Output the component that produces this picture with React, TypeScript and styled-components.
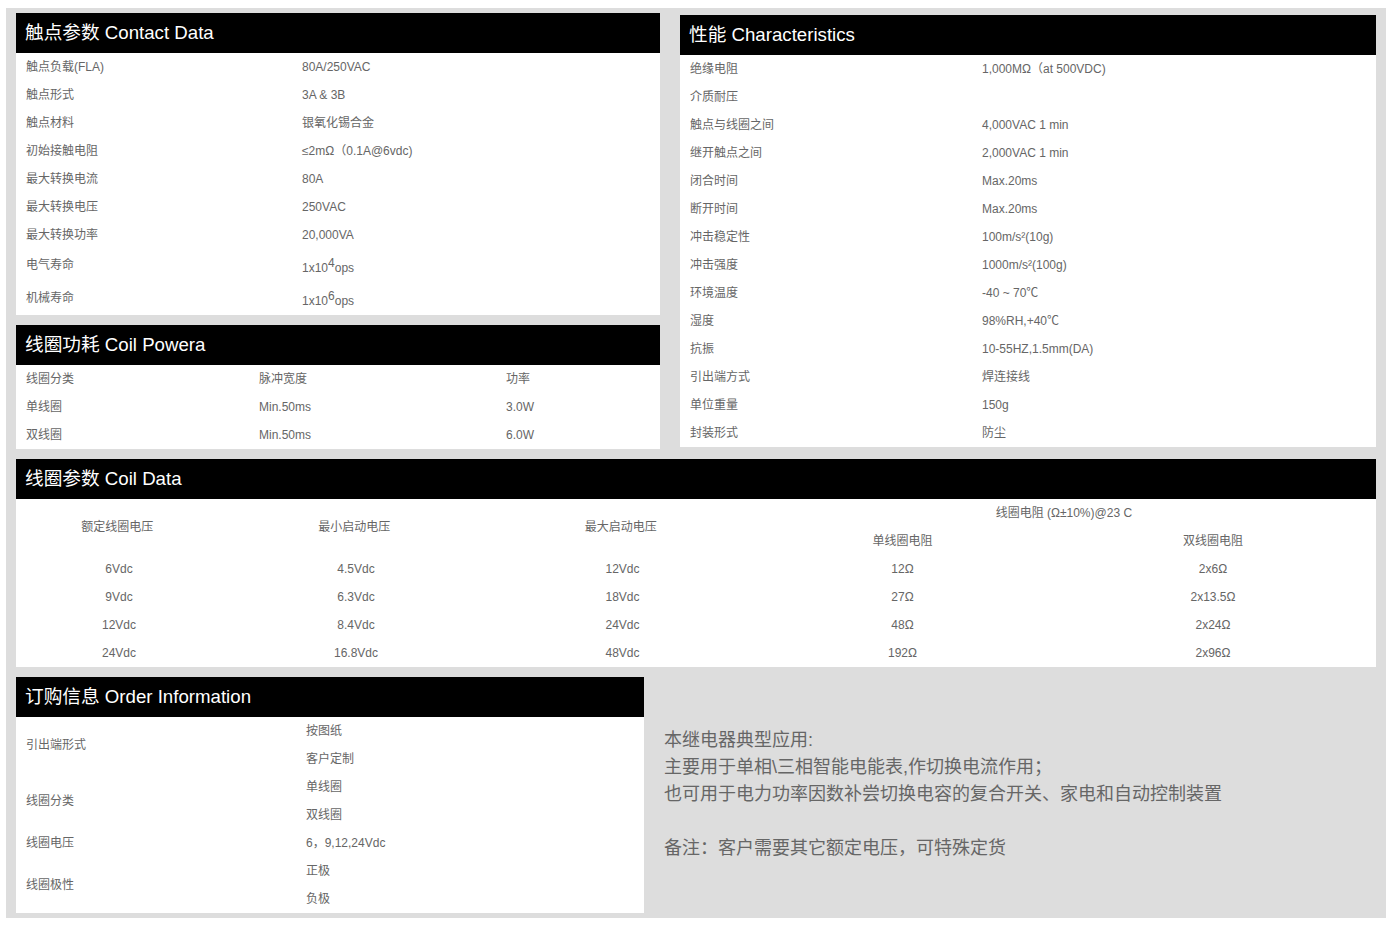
import React from "react";
import styled, { createGlobalStyle } from "styled-components";

const GlobalStyle = createGlobalStyle`
    html, body {
        margin: 0;
        padding: 0;
        background: #fff;
    }
    body {
        font-family: "Liberation Sans", Arial, "Noto Sans CJK SC", sans-serif;
        color: #666;
        font-size: 12px;
    }
`;

const Page = styled.div`
    width: 1380px;
    height: 910px;
    margin: 8px 0 0 6px;
    padding: 5px 10px;
    box-sizing: border-box;
    background: #ddd;
    display: flex;
    flex-direction: column;
    gap: 10px;
`;

const TopRow = styled.div`
    display: flex;
    align-items: flex-start;
    gap: 20px;
`;

const LeftColumn = styled.div`
    width: 644px;
    display: flex;
    flex-direction: column;
    gap: 10px;
`;

const RightColumn = styled.div`
    width: 696px;
    margin-top: 2px;
`;

const BottomRow = styled.div`
    display: flex;
    align-items: flex-start;
`;

const Card = styled.section<{ $width?: number }>`
    width: ${(p) => (p.$width ? `${p.$width}px` : "100%")};
    background: #fff;
    flex-shrink: 0;
`;

const Title = styled.h2`
    margin: 0;
    height: 40px;
    line-height: 40px;
    padding-left: 9px;
    background: #000;
    color: #fff;
    font-size: 18.67px;
    font-weight: 400;
`;

const Table = styled.table`
    width: 100%;
    table-layout: fixed;
    border-collapse: collapse;
`;

const Row = styled.tr<{ $tall?: boolean }>`
    height: ${(p) => (p.$tall ? 33 : 28)}px;
`;

const Cell = styled.td<{ $center?: boolean }>`
    padding: 0 0 0 ${(p) => (p.$center ? 0 : 10)}px;
    text-align: ${(p) => (p.$center ? "center" : "left")};
    font-size: 12px;
    line-height: 20px;
    color: #666;
    vertical-align: middle;
    white-space: nowrap;
`;

const LifeLabel = styled(Cell)`
    padding-bottom: 2px;
`;

const LifeValue = styled(Cell)`
    padding-top: 4px;
`;

const Sup = styled.sup`
    font-size: 12px;
    line-height: 0;
    vertical-align: 5px;
`;

const Note = styled.div`
    padding: 50px 0 0 20px;
    font-size: 18px;
    line-height: 27px;
    color: #666;
`;

const NoteLine = styled.div`
    min-height: 27px;
`;

const contact: [string, React.ReactNode][] = [
    ["触点负载(FLA)", "80A/250VAC"],
    ["触点形式", "3A & 3B"],
    ["触点材料", "银氧化锡合金"],
    ["初始接触电阻", "≤2mΩ（0.1A@6vdc)"],
    ["最大转换电流", "80A"],
    ["最大转换电压", "250VAC"],
    ["最大转换功率", "20,000VA"],
];

const characteristics = [
    ["绝缘电阻", "1,000MΩ（at 500VDC)"],
    ["介质耐压", ""],
    ["触点与线圈之间", "4,000VAC 1 min"],
    ["继开触点之间", "2,000VAC 1 min"],
    ["闭合时间", "Max.20ms"],
    ["断开时间", "Max.20ms"],
    ["冲击稳定性", "100m/s²(10g)"],
    ["冲击强度", "1000m/s²(100g)"],
    ["环境温度", "-40 ~ 70℃"],
    ["湿度", "98%RH,+40℃"],
    ["抗振", "10-55HZ,1.5mm(DA)"],
    ["引出端方式", "焊连接线"],
    ["单位重量", "150g"],
    ["封装形式", "防尘"],
];

const coilPower = [
    ["线圈分类", "脉冲宽度", "功率"],
    ["单线圈", "Min.50ms", "3.0W"],
    ["双线圈", "Min.50ms", "6.0W"],
];

const coilData = [
    ["6Vdc", "4.5Vdc", "12Vdc", "12Ω", "2x6Ω"],
    ["9Vdc", "6.3Vdc", "18Vdc", "27Ω", "2x13.5Ω"],
    ["12Vdc", "8.4Vdc", "24Vdc", "48Ω", "2x24Ω"],
    ["24Vdc", "16.8Vdc", "48Vdc", "192Ω", "2x96Ω"],
];

const Columns: React.FC<{ widths: number[] }> = ({ widths }) => (
    <colgroup>
        {widths.map((w, i) => (
            <col key={i} style={{ width: w }} />
        ))}
    </colgroup>
);

const App: React.FC = () => {
    return (
        <>
            <GlobalStyle />
            <Page>
                <TopRow>
                    <LeftColumn>
                        <Card>
                            <Title>触点参数 Contact Data</Title>
                            <Table>
                                <Columns widths={[276, 368]} />
                                <tbody>
                                    {contact.map(([label, value]) => (
                                        <Row key={label}>
                                            <Cell>{label}</Cell>
                                            <Cell>{value}</Cell>
                                        </Row>
                                    ))}
                                    <Row $tall>
                                        <LifeLabel>电气寿命</LifeLabel>
                                        <LifeValue>
                                            1x10<Sup>4</Sup>ops
                                        </LifeValue>
                                    </Row>
                                    <Row $tall>
                                        <LifeLabel>机械寿命</LifeLabel>
                                        <LifeValue>
                                            1x10<Sup>6</Sup>ops
                                        </LifeValue>
                                    </Row>
                                </tbody>
                            </Table>
                        </Card>
                        <Card>
                            <Title>线圈功耗 Coil Powera</Title>
                            <Table>
                                <Columns widths={[233, 247, 164]} />
                                <tbody>
                                    {coilPower.map((row) => (
                                        <Row key={row[0]}>
                                            {row.map((text) => (
                                                <Cell key={text}>{text}</Cell>
                                            ))}
                                        </Row>
                                    ))}
                                </tbody>
                            </Table>
                        </Card>
                    </LeftColumn>
                    <RightColumn>
                        <Card>
                            <Title>性能 Characteristics</Title>
                            <Table>
                                <Columns widths={[292, 404]} />
                                <tbody>
                                    {characteristics.map(([label, value]) => (
                                        <Row key={label}>
                                            <Cell>{label}</Cell>
                                            <Cell>{value}</Cell>
                                        </Row>
                                    ))}
                                </tbody>
                            </Table>
                        </Card>
                    </RightColumn>
                </TopRow>
                <Card>
                    <Title>线圈参数 Coil Data</Title>
                    <Table>
                        <Columns widths={[206, 268, 265, 295, 326]} />
                        <tbody>
                            <Row>
                                <Cell $center rowSpan={2}>额定线圈电压&nbsp;</Cell>
                                <Cell $center rowSpan={2}>最小启动电压&nbsp;</Cell>
                                <Cell $center rowSpan={2}>最大启动电压&nbsp;</Cell>
                                <Cell $center colSpan={2}>线圈电阻 (Ω±10%)@23 C&nbsp;</Cell>
                            </Row>
                            <Row>
                                <Cell $center>单线圈电阻</Cell>
                                <Cell $center>双线圈电阻</Cell>
                            </Row>
                            {coilData.map((row) => (
                                <Row key={row[0]}>
                                    {row.map((text) => (
                                        <Cell $center key={text}>{text}</Cell>
                                    ))}
                                </Row>
                            ))}
                        </tbody>
                    </Table>
                </Card>
                <BottomRow>
                    <Card $width={628}>
                        <Title>订购信息 Order Information</Title>
                        <Table>
                            <Columns widths={[280, 348]} />
                            <tbody>
                                <Row>
                                    <Cell rowSpan={2}>引出端形式</Cell>
                                    <Cell>按图纸</Cell>
                                </Row>
                                <Row>
                                    <Cell>客户定制</Cell>
                                </Row>
                                <Row>
                                    <Cell rowSpan={2}>线圈分类</Cell>
                                    <Cell>单线圈</Cell>
                                </Row>
                                <Row>
                                    <Cell>双线圈</Cell>
                                </Row>
                                <Row>
                                    <Cell>线圈电压</Cell>
                                    <Cell>6，9,12,24Vdc</Cell>
                                </Row>
                                <Row>
                                    <Cell rowSpan={2}>线圈极性</Cell>
                                    <Cell>正极</Cell>
                                </Row>
                                <Row>
                                    <Cell>负极</Cell>
                                </Row>
                            </tbody>
                        </Table>
                    </Card>
                    <Note>
                        <NoteLine>本继电器典型应用:</NoteLine>
                        <NoteLine>主要用于单相\三相智能电能表,作切换电流作用；</NoteLine>
                        <NoteLine>也可用于电力功率因数补尝切换电容的复合开关、家电和自动控制装置</NoteLine>
                        <NoteLine />
                        <NoteLine>备注：客户需要其它额定电压，可特殊定货</NoteLine>
                    </Note>
                </BottomRow>
            </Page>
        </>
    );
};

export default App;
